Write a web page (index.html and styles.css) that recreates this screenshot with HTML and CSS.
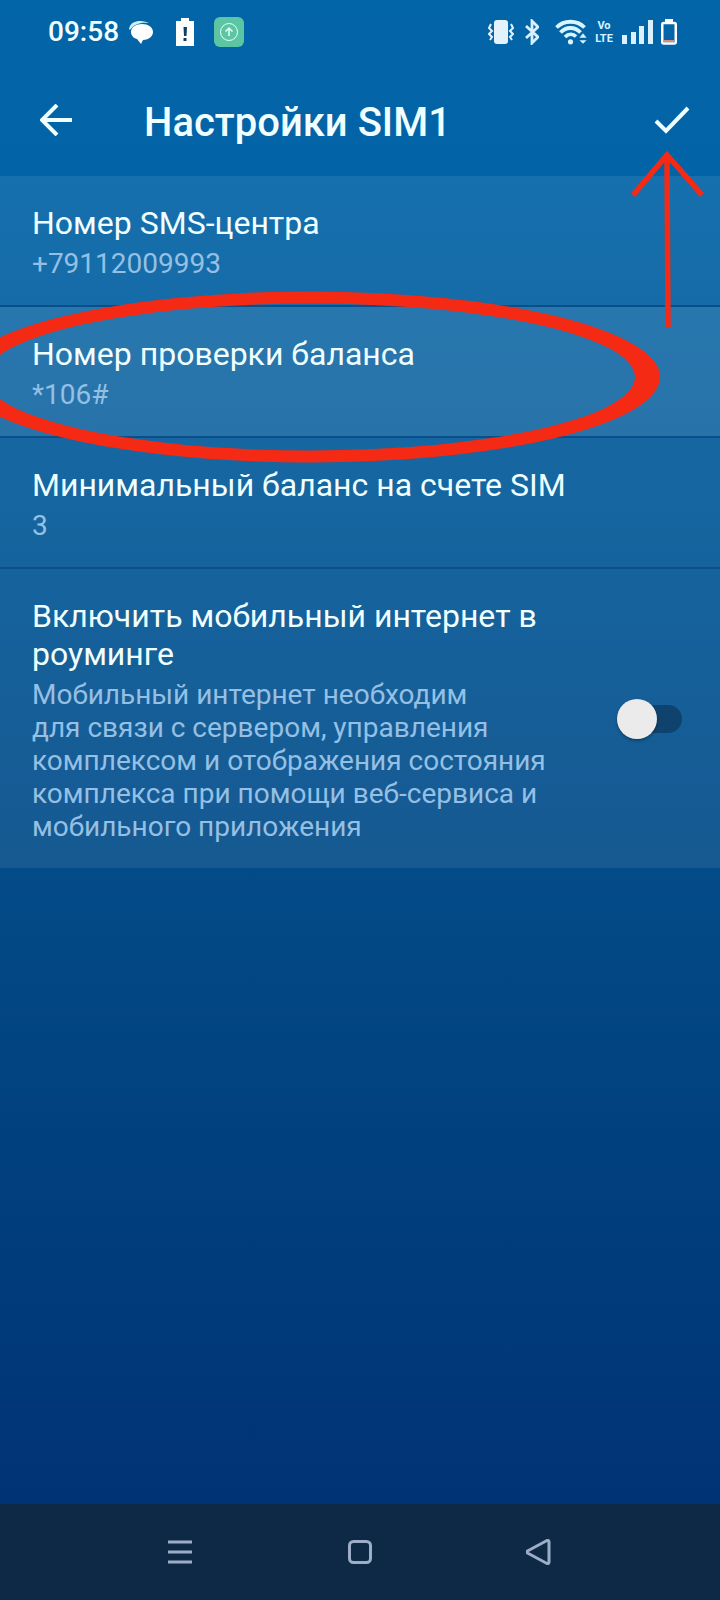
FILE: index.html
```html
<!DOCTYPE html>
<html lang="ru">
<head>
    <meta charset="UTF-8">
    <meta name="viewport" content="width=device-width, initial-scale=1.0">
    <title>Настройки SIM1</title>
    <link rel="stylesheet" href="styles.css">
</head>
<body>
    <div class="statusbar">
        <div class="status-left">
            <span class="clock">09:58</span>
            <svg class="icon-chat" width="26" height="26" viewBox="0 0 26 26">
                <path d="M1 10C2 4 7 2 12 2c4 0 7 1 9 2C13 3 6 5 2 11z" fill="#c9f2f5"/>
                <path d="M14 5c6 0 11 3 11 8 0 4-4 8-10 8l-2 4-4-5c-4-1-6-4-6-7 0-5 5-8 11-8z" fill="#fff"/>
            </svg>
            <svg class="icon-alert" width="18" height="28" viewBox="0 0 18 28">
                <path d="M0 3h5V0h8v3h5v25H0z" fill="#fff"/>
                <path d="M7.500 9h3.500l-.5 9H8zM7.500 20h3v3h-3z" fill="#0b3d66"/>
            </svg>
            <svg width="30" height="30" viewBox="0 0 30 30">
                <rect width="30" height="30" rx="6" fill="#5cc5a3"/>
                <g fill="none" stroke="#e4fff6">
                    <circle cx="15" cy="15" r="8.5" stroke-width="1"/>
                    <path d="M15 19v-8M11.500 14.500 15 11l3.500 3.500" stroke-width="1.500"/>
                </g>
            </svg>
        </div>
        <div class="status-right">
            <svg class="icon-vibrate" width="26" height="26" viewBox="0 0 26 26">
                <rect x="6" y="1" width="14" height="24" rx="3" fill="#e4f2fb"/>
                <path d="M3 5 1 9l3 3-3 3 3 3-2 3M23 5l2 4-3 3 3 3-3 3 2 3" fill="none" stroke="#e4f2fb" stroke-width="2"/>
            </svg>
            <svg class="icon-bluetooth" width="14" height="26" viewBox="0 0 14 26">
                <path d="M1 7l12 11-6 6V2l6 6L1 19" fill="none" stroke="#d8f0ff" stroke-width="2.800"/>
            </svg>
            <svg class="icon-wifi" width="32" height="26" viewBox="0 0 32 26">
                <g fill="none" stroke="#d8f4ff" stroke-width="3.800">
                    <path d="M1.500 8.500C9 .800 22 .800 29.500 8.500"/>
                    <path d="M5.500 13.500c5.500-6 14.500-6 20 0"/>
                    <path d="M10 18c3.500-3.500 8-3.500 11-.500"/>
                </g>
                <circle cx="15.500" cy="22.800" r="2.600" fill="#d8f4ff"/>
                <path d="M24 19l4-5 4 5zM24 21h8l-4 4z" fill="#d8f4ff" stroke="#0264a8" stroke-width=".500"/>
            </svg>
            <span class="volte"><span>Vo</span><span>LTE</span></span>
            <svg class="icon-signal" width="31" height="26" viewBox="0 0 31 26">
                <path d="M0 16h5v9H0zM9 13h5v12H9zM17 7h5v18h-5zM26 1h5v24h-5z" fill="#dcf1ff"/>
            </svg>
            <svg width="16" height="26" viewBox="0 0 16 26">
                <path d="M4 0h8v4H4z" fill="#fff"/>
                <rect x="1.250" y="4" width="13.500" height="20.500" rx="1.500" fill="none" stroke="#fff" stroke-width="2.500"/>
                <path d="M3 21h10v2H3z" fill="#e08a78"/>
            </svg>
        </div>
    </div>

    <header class="header">
        <button class="icon-button" type="button" aria-label="Назад">
            <svg width="32" height="32" viewBox="0 0 32 32">
                <path d="M32 16H2M17 1 2 16l15 15" fill="none" stroke="#f0ffff" stroke-width="4"/>
            </svg>
        </button>
        <h1>Настройки SIM1</h1>
        <button class="icon-button" type="button" aria-label="Сохранить">
            <svg width="36" height="28" viewBox="0 0 36 28">
                <path d="M2 15l10 10L34 2" fill="none" stroke="#f0ffff" stroke-width="4"/>
            </svg>
        </button>
        <svg class="arrow" width="74" height="178" viewBox="0 0 74 178" aria-hidden="true">
            <path d="M3 45 37 5l35 40M37 6l1 171" fill="none" stroke="#f52a14" stroke-width="5.500"/>
        </svg>
    </header>

    <main class="settings">
        <div class="row">
            <div class="text">
                <h2>Номер SMS-центра</h2>
                <p>+79112009993</p>
            </div>
        </div>
        <div class="row active">
            <div class="text">
                <h2>Номер проверки баланса</h2>
                <p>*106#</p>
            </div>
            <svg class="ring" width="660" height="172" viewBox="0 0 660 172" aria-hidden="true">
                <path fill="#f52a14" fill-rule="evenodd" d="M-40 86a350 85.500 0 0 1 700 0a350 85.500 0 0 1-700 0zM-15 86a325 73.500 0 0 0 650 0a325 73.500 0 0 0-650 0z"/>
            </svg>
        </div>
        <div class="row">
            <div class="text">
                <h2>Минимальный баланс на счете SIM</h2>
                <p>3</p>
            </div>
        </div>
        <div class="row">
            <label class="text" for="roaming">
                <span class="title">Включить мобильный интернет в роуминге</span>
                <span class="note">Мобильный интернет необходим для&nbsp;связи с сервером, управления комплексом и отображения состояния комплекса при помощи веб-сервиса и мобильного приложения</span>
            </label>
            <input class="switch" type="checkbox" id="roaming">
        </div>
    </main>

    <nav class="navbar">
        <button type="button" aria-label="Недавние">
            <svg width="24" height="24" viewBox="0 0 24 24">
                <path d="M0 2h24M0 12h24M0 22h24" stroke="#9dadc8" stroke-width="3"/>
            </svg>
        </button>
        <button type="button" aria-label="Домой">
            <svg width="24" height="24" viewBox="0 0 24 24">
                <rect x="1.500" y="1.500" width="21" height="21" rx="4" fill="none" stroke="#9dadc8" stroke-width="3"/>
            </svg>
        </button>
        <button type="button" aria-label="Назад">
            <svg width="28" height="26" viewBox="1 0 28 26">
                <path d="M2.500 12 22 1.500Q24 1 24 3v20q0 2-2 1.500L2.500 14Q1 13 2.500 12z" fill="none" stroke="#9dadc8" stroke-width="3" stroke-linejoin="round"/>
            </svg>
        </button>
    </nav>
</body>
</html>
```
FILE: styles.css
```css
* {
    box-sizing: border-box;
}
body {
    display: flex;
    flex-direction: column;
    min-height: 100vh;
    margin: 0;
    overflow-x: hidden;
    font-family: Roboto, "Liberation Sans", sans-serif;
    color: #f0ffff;
    background: linear-gradient(#0265a8 0%, #0264a6 11%, #034b88 55%, #01417f 70%, #003376 94%);
}
h1, h2, p {
    margin: 0;
}
svg {
    display: block;
    flex: none;
}
button {
    display: flex;
    align-items: center;
    justify-content: center;
    padding: 0;
    border: 0;
    background: none;
    cursor: pointer;
}

/* Status bar */
.statusbar {
    display: flex;
    justify-content: space-between;
    height: 64px;
    padding: 0 43px 0 48px;
}
.status-left, .status-right {
    display: flex;
    align-items: center;
}
.clock {
    font-size: 28px;
    font-weight: 500;
    line-height: 32px;
}
.icon-chat {
    margin: 0 22px 0 9px;
}
.icon-alert {
    margin-right: 20px;
}
.icon-vibrate {
    margin-right: 11px;
}
.icon-bluetooth {
    margin-right: 16px;
}
.icon-wifi {
    margin-right: 8px;
}
.volte {
    display: flex;
    flex-direction: column;
    align-items: center;
    width: 18px;
    margin-right: 9px;
    font-family: "Liberation Sans Narrow", Roboto, sans-serif;
    font-size: 11px;
    font-weight: 700;
    line-height: 13px;
    color: #d8f4ff;
}
.icon-signal {
    margin-right: 8px;
}

/* Header */
.header {
    position: relative;
    display: flex;
    align-items: center;
    height: 112px;
    padding: 0 20px 0 28px;
}
.header h1 {
    flex: 1;
    padding: 6px 0 0 60px;
    font-size: 40px;
    font-weight: 500;
    line-height: 48px;
}
.icon-button {
    width: 56px;
    height: 56px;
}
.arrow {
    position: absolute;
    z-index: 2;
    top: 86px;
    right: 16px;
    pointer-events: none;
}

/* Settings list */
.settings {
    flex: 1;
}
.row {
    position: relative;
    display: flex;
    align-items: center;
    justify-content: space-between;
    padding: 0 38px 0 32px;
    background: rgba(255, 255, 255, 0.08);
}
.row + .row {
    border-top: 2px solid #0b4f8a;
    background-clip: padding-box;
}
.row.active {
    background-color: rgba(255, 255, 255, 0.15);
}
.text {
    flex: 1;
    padding: 28px 0 25px;
}
label.text {
    max-width: 530px;
}
.title, .note {
    display: block;
}
.row h2, .title {
    margin-bottom: 5px;
    font-size: 32px;
    font-weight: 400;
    line-height: 38px;
}
.row p, .note {
    font-size: 28px;
    line-height: 33px;
    color: #95c0e4;
}
.ring {
    position: absolute;
    z-index: 1;
    top: -16px;
    left: 0;
    pointer-events: none;
}

.switch {
    appearance: none;
    position: relative;
    width: 64px;
    height: 28px;
    margin: 0;
    border-radius: 14px;
    background: #0f426d;
    cursor: pointer;
}
.switch::before {
    content: "";
    position: absolute;
    top: -6px;
    left: -1px;
    width: 40px;
    height: 40px;
    border-radius: 50%;
    background: #ebebeb;
    box-shadow: 0 2px 3px rgba(0, 0, 0, 0.3);
}
.switch:checked::before {
    left: 25px;
}

/* System navigation */
.navbar {
    display: grid;
    grid-template-columns: repeat(3, 1fr);
    height: 96px;
    padding: 0 12.5%;
    background: #0e2945;
}
```
